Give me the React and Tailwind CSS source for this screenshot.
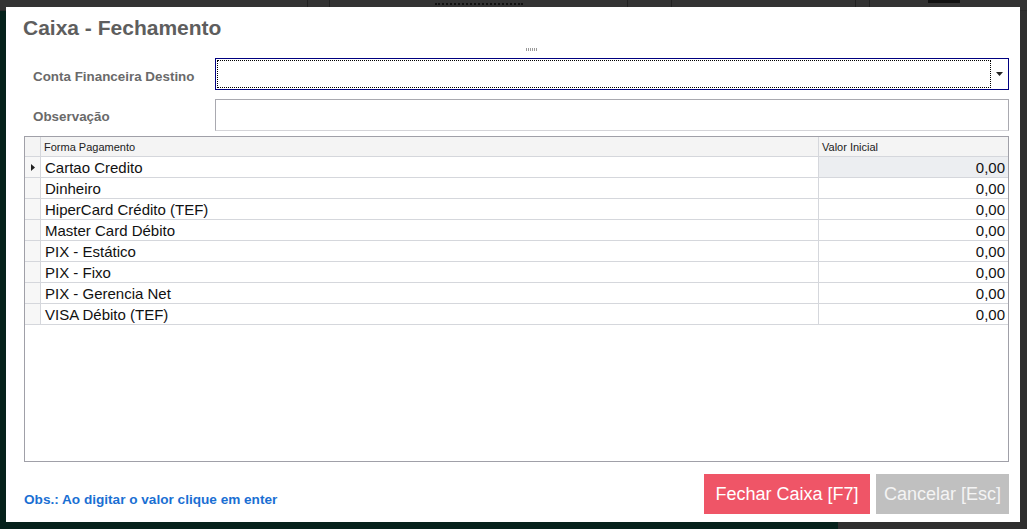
import React from 'react';

const rows = [
  'Cartao Credito',
  'Dinheiro',
  'HiperCard Crédito (TEF)',
  'Master Card Débito',
  'PIX - Estático',
  'PIX - Fixo',
  'PIX - Gerencia Net',
  'VISA Débito (TEF)',
];

const font = { fontFamily: '"Liberation Sans", Arial, sans-serif' };

const App = () => {
  return (
    <div className="relative w-[1027px] h-[529px] overflow-hidden flex flex-col bg-[#303030]" style={font}>
      {/* background screen behind the dialog */}
      <div className="h-[11px] flex bg-[#333333] border-b border-[#2a2a2a]">
        <div className="w-[308px] border-r border-[#222]" />
        <div className="w-[22px] border-r border-[#222]" />
        <div className="w-[298px] border-r border-[#222] flex justify-center">
          <div className="w-[88px] h-[4px] mt-[1px] border-b-2 border-dotted border-[#111]" />
        </div>
        <div className="w-[44px] border-r border-[#222]" />
        <div className="w-[184px] border-r border-[#222]" />
        <div className="w-[14px] border-r border-[#222]" />
        <div className="flex-1 flex">
          <div className="ml-[58px] w-[32px] h-[3px] bg-[#111]" />
        </div>
      </div>
      <div className="flex-1 flex">
        <div className="w-[838px] bg-[#05211b]" />
        <div className="flex-1 bg-[#2f2f2f]" />
      </div>

      {/* dialog */}
      <div className="absolute left-[6px] top-[7px] w-[1014px] h-[515px] bg-white flex flex-col pl-[18px] pr-[11px]">
        <h1 className="-ml-[1px] pt-[9px] text-[21px] leading-[24px] font-bold text-[#5e5e5e]">Caixa - Fechamento</h1>

        {/* splitter grip */}
        <div className="h-[18px] flex items-center justify-center pl-[30px]">
          <div className="flex gap-[1px]">
            {[0, 1, 2, 3, 4, 5].map((i) => (
              <div key={i} className="w-[1px] h-[3px] bg-[#9a9a9a]" />
            ))}
          </div>
        </div>

        {/* Conta Financeira Destino */}
        <div className="flex items-center h-[32px]">
          <label className="w-[191px] pl-[9px] pt-[6px] text-[13.4px] font-bold text-[#6a6a6a]">Conta Financeira Destino</label>
          <div className="flex-1 h-[32px] border border-[#000080] flex items-stretch p-[1px]">
            <div className="flex-1 border border-dotted border-black" />
            <div className="w-[16px] flex items-center justify-center">
              <svg width="7" height="4" viewBox="0 0 7 4">
                <path d="M0 0h7L3.5 4z" fill="#222" />
              </svg>
            </div>
          </div>
        </div>

        {/* Observação */}
        <div className="flex items-center h-[32px] mt-[9px]">
          <label className="w-[191px] pl-[9px] pt-[5px] text-[13.4px] font-bold text-[#6a6a6a]">Observação</label>
          <div className="flex-1 h-[32px] border border-[#a9a9b0] border-b-[#d4d4d8]" />
        </div>

        {/* grid */}
        <div className="mt-[5px] h-[326px] border border-[#a0a0a8] flex flex-col">
          <div className="flex h-[20px] bg-[#f4f4f4] border-b border-[#d5d7dc] text-[11px] text-[#222]">
            <div className="w-[16px] border-r border-[#d5d7dc]" />
            <div className="flex-1 border-r border-[#d5d7dc] pl-[3px] pt-[1px] flex items-center">Forma Pagamento</div>
            <div className="w-[189px] pl-[3px] pt-[1px] flex items-center">Valor Inicial</div>
          </div>
          {rows.map((name, i) => (
            <div key={name} className="flex h-[21px] border-b border-[#d5d7dc] text-[15px] text-[#111]">
              <div className="w-[16px] border-r border-[#d5d7dc] bg-[#f7f7f7] flex items-center justify-center">
                {i === 0 && (
                  <svg width="4" height="7" viewBox="0 0 4 7">
                    <path d="M0 0l4 3.5L0 7z" fill="#222" />
                  </svg>
                )}
              </div>
              <div className="flex-1 border-r border-[#d5d7dc] pl-[4px] pt-[2px] flex items-center">{name}</div>
              <div className={`w-[189px] pr-[3px] pt-[2px] flex items-center justify-end ${i === 0 ? 'bg-[#eceef1]' : ''}`}>0,00</div>
            </div>
          ))}
          <div className="flex-1" />
        </div>

        {/* footer */}
        <div className="flex items-center justify-between mt-[12px]">
          <span className="pt-[12px] text-[13.6px] font-bold text-[#1a6fd3]">Obs.: Ao digitar o valor clique em enter</span>
          <div className="flex gap-[6px]">
            <button className="w-[166px] h-[40px] bg-[#ef5567] text-white text-[18px]">Fechar Caixa [F7]</button>
            <button className="w-[133px] h-[40px] bg-[#c0c0c0] text-[#f4f4f4] text-[18px]">Cancelar [Esc]</button>
          </div>
        </div>
      </div>
    </div>
  );
};

export default App;
